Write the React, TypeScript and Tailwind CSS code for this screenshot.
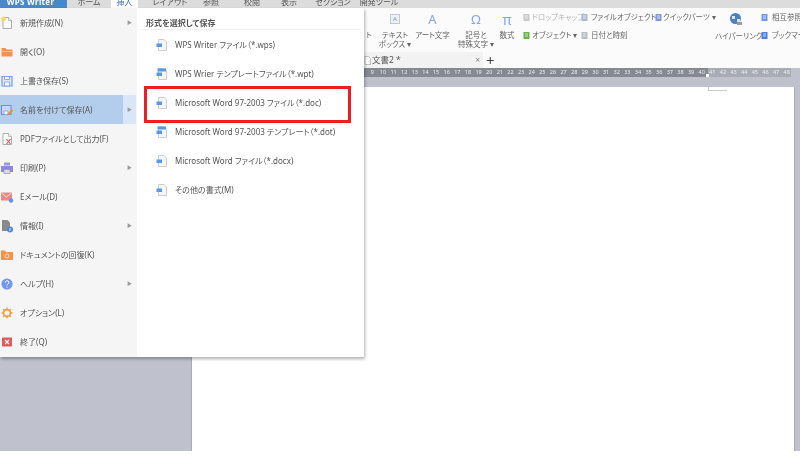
import React from 'react';

const Page = ({ children }: { children?: React.ReactNode }) => (
    <svg width="14" height="14" viewBox="0 0 14 14" className="shrink-0">
        <path d="M3 1.5h5.5L11.5 4.5v8H3z" fill="#fff" stroke="#9a9a9a" strokeWidth="0.8" />
        <path d="M8.5 1.5v3h3" fill="#eee" stroke="#9a9a9a" strokeWidth="0.6" />
        {children}
    </svg>
);

const icons: Record<string, React.ReactNode> = {
    new: (
        <Page>
            <circle cx="3.5" cy="3" r="2.4" fill="#f5d76a" />
        </Page>
    ),
    open: (
        <svg width="14" height="14" viewBox="0 0 14 14">
            <path d="M1.5 3h4l1 1.5h6v7h-11z" fill="#f0944d" />
            <path d="M1.5 6h11v1h-11z" fill="#f8c295" />
        </svg>
    ),
    save: (
        <svg width="14" height="14" viewBox="0 0 14 14">
            <path d="M2 2.5h10v9.5H2z" fill="#dfe9fd" stroke="#6f9bf2" strokeWidth="1.2" />
            <path d="M4.5 2.5h5v3h-5zM4.5 8h5v4h-5z" fill="#fff" stroke="#6f9bf2" strokeWidth="0.8" />
        </svg>
    ),
    saveAs: (
        <svg width="14" height="14" viewBox="0 0 14 14">
            <path d="M1.5 2.5h9.5v9H1.5z" fill="#c9d7f4" stroke="#6f8fe0" strokeWidth="1.1" />
            <path d="M4 8h4v3.5H4z" fill="#fff" stroke="#6f8fe0" strokeWidth="0.7" />
            <path d="M7 12.5l1-2.5 4-3.5 1.3 1.3-4 3.7z" fill="#ee8c3a" />
        </svg>
    ),
    pdf: (
        <Page>
            <path d="M6.5 7l4 5M10.5 7l-4 5" stroke="#e2574c" strokeWidth="1.2" />
        </Page>
    ),
    print: (
        <svg width="14" height="14" viewBox="0 0 14 14">
            <path d="M4 1.5h6v3H4z" fill="#9d97dd" />
            <path d="M1 5h12v6H1z" fill="#8f88d6" />
            <path d="M4 8.5h6v4H4z" fill="#dcdaf5" stroke="#8f88d6" strokeWidth="0.7" />
        </svg>
    ),
    mail: (
        <svg width="14" height="14" viewBox="0 0 14 14">
            <path d="M1 2.5h11v8H1z" fill="#e78a84" />
            <path d="M1.5 3l5 4 5-4" fill="none" stroke="#fbe0de" strokeWidth="0.9" />
            <circle cx="11" cy="10.5" r="2.2" fill="#5b97e5" />
        </svg>
    ),
    info: (
        <svg width="14" height="14" viewBox="0 0 14 14">
            <path d="M2 1h5.5L10 3.5V12H2z" fill="#8a8a8a" />
            <circle cx="10" cy="10.5" r="3" fill="#4f86dd" />
            <path d="M10 9v3" stroke="#fff" strokeWidth="0.8" />
        </svg>
    ),
    recover: (
        <svg width="14" height="14" viewBox="0 0 14 14">
            <path d="M1 2.5h4l1 1.5h7v8H1z" fill="#f0944d" />
            <circle cx="7" cy="8" r="2" fill="none" stroke="#fde3cc" strokeWidth="0.9" />
        </svg>
    ),
    help: (
        <svg width="14" height="14" viewBox="0 0 14 14">
            <circle cx="7" cy="7" r="5.6" fill="#6f97ee" />
            <path d="M5.3 5.6a1.8 1.8 0 1 1 2.6 1.5c-.6.3-.9.6-.9 1.3M7 9.6v1" fill="none" stroke="#fff" strokeWidth="1" />
        </svg>
    ),
    option: (
        <svg width="14" height="14" viewBox="0 0 14 14">
            <circle cx="7" cy="7" r="3.4" fill="none" stroke="#ee9a3c" strokeWidth="1.6" />
            <path d="M7 1.5v2M7 10.5v2M1.5 7h2M10.5 7h2M3.1 3.1l1.4 1.4M9.5 9.5l1.4 1.4M3.1 10.9l1.4-1.4M9.5 4.5l1.4-1.4" stroke="#ee9a3c" strokeWidth="1.3" />
        </svg>
    ),
    exit: (
        <svg width="14" height="14" viewBox="0 0 14 14">
            <path d="M2 2.5h10v9H2z" fill="#dd5a5f" />
            <path d="M5 5l4 4M9 5l-4 4" stroke="#fff" strokeWidth="1.1" />
        </svg>
    ),
};

const FileIcon = ({ template }: { template?: boolean }) => (
    <svg width="14" height="14" viewBox="0 0 14 14" className="shrink-0">
        <path d="M3.5 1.5h5.5l2.5 2.5v8.5h-8z" fill="#f4f6fa" stroke="#b4bac4" strokeWidth="0.7" />
        {template ? <path d="M2.5 1.5h8.5v3H2.5z" fill="#5b97e5" /> : null}
        <path d="M1.5 5.5h5.5v3.5H1.5z" fill="#5b97e5" />
    </svg>
);

const menuItems = [
    { icon: 'new', label: '新規作成(N)', arrow: true },
    { icon: 'open', label: '開く(O)' },
    { icon: 'save', label: '上書き保存(S)' },
    { icon: 'saveAs', label: '名前を付けて保存(A)', arrow: true, active: true },
    { icon: 'pdf', label: 'PDFファイルとして出力(F)' },
    { icon: 'print', label: '印刷(P)', arrow: true },
    { icon: 'mail', label: 'Eメール(D)' },
    { icon: 'info', label: '情報(I)', arrow: true },
    { icon: 'recover', label: 'ドキュメントの回復(K)' },
    { icon: 'help', label: 'ヘルプ(H)', arrow: true },
    { icon: 'option', label: 'オプション(L)' },
    { icon: 'exit', label: '終了(Q)' },
];

const formats = [
    { label: 'WPS Writer ファイル（*.wps)', template: false },
    { label: 'WPS Wrier テンプレートファイル（*.wpt)', template: true },
    { label: 'Microsoft Word 97-2003 ファイル（*.doc)', template: false },
    { label: 'Microsoft Word 97-2003 テンプレート（*.dot)', template: true },
    { label: 'Microsoft Word ファイル（*.docx)', template: false },
    { label: 'その他の書式(M)', template: false },
];

const tabs = [
    { label: 'ホーム', className: 'w-[44px]' },
    { label: '挿入', className: 'w-[27px] bg-white text-[#3f76b8]' },
    { label: 'レイアウト', className: 'w-[64px]' },
    { label: '参照', className: 'w-[18px]' },
    { label: '校閲', className: 'ml-[22px] w-[20px]' },
    { label: '表示', className: 'ml-[17px] w-[20px]' },
    { label: 'セクション', className: 'ml-[14px] w-[40px]' },
    { label: '開発ツール', className: 'ml-[6px] w-[40px]' },
];

const rulerNumbers = Array.from({ length: 40 }, (_, i) => i + 9);

const Small = ({ color }: { color: string }) => (
    <svg width="9" height="9" viewBox="0 0 9 9" className="shrink-0">
        <path d="M1.5 1h6v7h-6z" fill={color} />
        <path d="M3 3h3M3 5h3" stroke="#fff" strokeWidth="0.7" />
    </svg>
);

export default function App() {
    return (
        <div className="relative flex h-[456px] w-[800px] flex-col overflow-hidden bg-white text-[#555] blur-[0.35px] [font-family:'Noto_Sans','Noto_Sans_CJK_JP',sans-serif] [font-feature-settings:'palt']">
            <div className="flex h-2 shrink-0 overflow-hidden bg-[#dcdcdc] text-[8px] leading-[3px] whitespace-nowrap">
                <div className="w-[67px] shrink-0 bg-[#4a86cc] pr-[6px] text-center font-bold tracking-[0.3px] text-white">WPS Writer</div>
                {tabs.map((tab) => (
                    <div key={tab.label} className={`shrink-0 text-center ${tab.className}`}>
                        {tab.label}
                    </div>
                ))}
            </div>

            <div className="flex h-11 shrink-0 items-start overflow-hidden bg-[#fbfbfb] pl-[364px] text-[7.5px] leading-[9px] whitespace-nowrap text-[#666]">
                <div className="w-[17px] shrink-0 pt-[23px] pl-[2px]">ト</div>
                <div className="flex w-[28px] shrink-0 flex-col items-center pt-[6px] text-center">
                    <div className="flex h-[10px] w-[10px] items-center justify-center border border-[#c5c8d0] bg-[#eef0f5] text-[6px] text-[#6f8fd8]">A</div>
                    <div className="mt-[7px]">テキスト</div>
                    <div>ボックス ▾</div>
                </div>
                <div className="ml-[10px] flex w-[27px] shrink-0 flex-col items-center pt-[1px]">
                    <div className="flex h-[20px] items-center text-[13px] text-[#7fa6e8]">A</div>
                    <div className="mt-[2px]">アート文字</div>
                </div>
                <div className="ml-[9px] flex w-[42px] shrink-0 flex-col items-center pt-[1px]">
                    <div className="flex h-[20px] items-center text-[13px] text-[#7fa6e8]">Ω</div>
                    <div className="mt-[2px]">記号と</div>
                    <div>特殊文字 ▾</div>
                </div>
                <div className="flex w-[20px] shrink-0 flex-col items-center pt-[1px]">
                    <div className="flex h-[20px] items-center text-[14px] text-[#7fa6e8]">π</div>
                    <div className="mt-[2px]">数式</div>
                </div>
                <div className="ml-[5px] flex w-[58px] shrink-0 flex-col gap-[9px] pt-[5px]">
                    <div className="flex items-center gap-[1px] text-[#b5b5b5]">
                        <Small color="#c9c9c9" />
                        ドロップキャップ
                    </div>
                    <div className="flex items-center gap-[1px]">
                        <Small color="#6ab04c" />
                        オブジェクト ▾
                    </div>
                </div>
                <div className="flex w-[74px] shrink-0 flex-col gap-[9px] pt-[5px]">
                    <div className="flex items-center gap-[2px]">
                        <Small color="#a9b9d4" />
                        ファイルオブジェクト
                    </div>
                    <div className="flex items-center gap-[2px]">
                        <Small color="#b9bcc4" />
                        日付と時刻
                    </div>
                </div>
                <div className="w-[61px] shrink-0 pt-[5px]">
                    <div className="flex items-center">
                        <Small color="#7f9bdc" />
                        クイックパーツ ▾
                    </div>
                </div>
                <div className="flex w-[45px] shrink-0 flex-col items-start pt-[4px]">
                    <svg width="14" height="14" viewBox="0 0 14 14" className="ml-[14px]">
                        <circle cx="6.5" cy="6.5" r="5.5" fill="#4d7fc4" />
                        <path d="M3 4h3v3H3zM8 7h3v3H8z" fill="#d7e4f5" />
                        <path d="M8 10h5v3H8z" fill="#9a9a9a" />
                    </svg>
                    <div className="mt-[6px]">ハイパーリンク</div>
                </div>
                <div className="flex shrink-0 flex-col gap-[9px] pt-[5px]">
                    <div className="flex items-center gap-[3px]">
                        <Small color="#6f97ee" />
                        相互参照
                    </div>
                    <div className="flex items-center gap-[3px]">
                        <Small color="#4f7fdd" />
                        ブックマーク
                    </div>
                </div>
            </div>

            <div className="flex h-4 shrink-0 items-center bg-[#fbfbfb] pl-[364px] text-[8.5px]">
                <div className="flex h-full w-[119px] shrink-0 items-center justify-between bg-[#f2f2f2] pr-[3px]">
                    <span className="flex items-center gap-[1px]">
                        <svg width="7" height="9" viewBox="0 0 7 9" className="shrink-0">
                            <path d="M1 .5h3.5L6.5 2.500v6H1z" fill="#fff" stroke="#a8a8a8" strokeWidth="0.7" />
                        </svg>
                        文書2 *
                    </span>
                    <span className="text-[#888]">×</span>
                </div>
                <span className="ml-[3px] text-[15px] leading-none text-[#444]">+</span>
            </div>

            <div className="flex flex-1 flex-col bg-[#bfc1cc]">
                <div className="flex h-[9px] shrink-0 pl-[364px]">
                    <div className="relative flex h-full w-[427px] bg-[#a9abb5] pl-[3px] text-[5.5px] leading-[9px] text-[#eceef2]">
                        <div className="absolute inset-y-0 left-0 w-[344px] bg-[#868892]" />
                        {rulerNumbers.map((n) => (
                            <span key={n} className="relative w-[10.64px] shrink-0 text-center">
                                {n}
                            </span>
                        ))}
                        <div className="absolute bottom-0 left-[342px] h-[3px] w-[3px] bg-white" />
                    </div>
                </div>
                <div className="flex min-h-0 flex-1 pt-[10px] pr-[5px] pl-[191px]">
                    <div className="relative flex-1 border-r border-l border-[#a8aab6] bg-white">
                        <div className="absolute top-0 left-[516px] h-[4px] w-[19px] border-b border-l border-[#c8c8c8]" />
                    </div>
                </div>
                <div className="h-[5px] shrink-0 bg-white" />
            </div>

            <div className="absolute top-2 left-0 flex h-[349px] shadow-[1px_2px_3px_rgba(0,0,0,0.3)]">
                <div className="flex w-[137px] flex-col bg-[#f5f5f5] text-[8px]">
                    {menuItems.map((item) => (
                        <div key={item.label} className="flex h-[29px] shrink-0">
                            <div className={`flex w-[123px] items-center gap-[6px] whitespace-nowrap ${item.active ? 'bg-[#b3cdec]' : ''}`}>
                                <span className="flex w-[14px] justify-center">{icons[item.icon]}</span>
                                {item.label}
                            </div>
                            <div className={`flex w-[13px] items-center justify-center text-[5px] text-[#999] ${item.active ? 'bg-[#d8e6f8]' : ''}`}>
                                {item.arrow ? '▶' : ''}
                            </div>
                        </div>
                    ))}
                </div>
                <div className="flex w-[227px] flex-col bg-white text-[8px]">
                    <div className="mx-[3px] flex h-[22px] shrink-0 items-end border-b border-[#f0f0f0] pb-[2px] pl-[6px] leading-[8px] font-bold text-[#555]">形式を選択して保存</div>
                    {formats.map((format) => (
                        <div key={format.label} className="flex h-[29px] shrink-0 items-center gap-[6px] pl-[18px] whitespace-nowrap">
                            <FileIcon template={format.template} />
                            {format.label}
                        </div>
                    ))}
                </div>
                <div className="absolute top-[78px] left-[144px] h-[37px] w-[207px] border-[3px] border-[#ee1c25]" />
            </div>
        </div>
    );
}
